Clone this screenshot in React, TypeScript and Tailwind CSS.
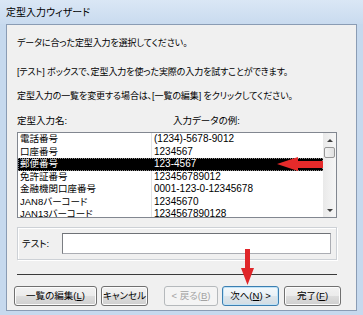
import type { ReactNode } from 'react'

const rows = [
  ['電話番号', '(1234)-5678-9012'],
  ['口座番号', '1234567'],
  ['郵便番号', '123-4567'],
  ['免許証番号', '123456789012'],
  ['金融機関口座番号', '0001-123-0-12345678'],
  ['JAN8バーコード', '12345670'],
  ['JAN13バーコード', '1234567890128'],
]

function Btn({ children, kind, className }: { children: ReactNode; kind?: 'default' | 'disabled'; className?: string }) {
  const look =
    kind === 'disabled'
      ? 'border-[#b5b9bc] bg-[#f4f4f4] text-[#a3a3a3]'
      : kind === 'default'
        ? 'border-[#3c7fb1] bg-[linear-gradient(#f4f9fc,#eaf1f6_50%,#dde6ec_50%,#d2dce3)] shadow-[inset_0_0_0_1px_#bfe2f7] text-black'
        : 'border-[#707070] bg-[linear-gradient(#f2f2f2,#ebebeb_50%,#dddddd_50%,#cfcfcf)] shadow-[inset_0_0_0_1px_#fcfcfc] text-black'
  return (
    <div className={`shrink-0 h-[20px] rounded-[3px] border flex items-center justify-center whitespace-nowrap text-[9.5px] ${look} ${className ?? ''}`}>
      {children}
    </div>
  )
}

export default function App() {
  return (
    <div className="relative w-[363px] h-[315px] overflow-hidden bg-[#c6d9ee] font-['Liberation_Sans','Noto_Sans_CJK_JP',sans-serif] [font-feature-settings:'palt'] text-black">
      {/* title bar */}
      <div className="h-[24px] px-[6px] flex items-center text-[10px] bg-[linear-gradient(#dae7f5,#c9dbef)]">
        定型入力ウィザード
      </div>

      {/* dialog body */}
      <div className="mx-[6px] h-[287px] border border-[#8a9cb4] bg-[#f0f0f0] flex flex-col">
        <div className="pl-[10px] pr-[19px] text-[9.5px] leading-[12px]">
          <div className="text-[9px] tracking-[-0.1px]">
            <p className="mt-[12px]">データに合った定型入力を選択してください。</p>
            <p className="mt-[17px]">[テスト] ボックスで、定型入力を使った実際の入力を試すことができます。</p>
            <p className="mt-[12px]">定型入力の一覧を変更する場合は、[一覧の編集] をクリックしてください。</p>
          </div>

          <div className="mt-[13px] grid grid-cols-[156px_1fr]">
            <span>定型入力名:</span>
            <span>入力データの例:</span>
          </div>

          {/* list box */}
          <div className="mt-[5px] h-[86px] border border-[#828790] bg-white flex overflow-hidden">
            <div className="flex-1 overflow-hidden">
              {rows.map(([name, sample], i) => {
                const sel = i === 2
                return (
                  <div
                    key={name}
                    className={`h-[12.5px] flex items-center leading-[12px] ${sel ? 'bg-black text-white outline outline-1 outline-dotted outline-[#888] -outline-offset-1' : ''}`}
                  >
                    <span className={`w-[134px] shrink-0 pl-[2px] h-full flex items-center border-r ${sel ? 'border-black' : 'border-[#e3e3e3]'}`}>{name}</span>
                    <span className="pl-[2px] text-[10px]">{sample}</span>
                  </div>
                )
              })}
            </div>
            {/* scrollbar */}
            <div className="w-[13px] bg-[linear-gradient(90deg,#e9e9e9,#f6f6f6)] flex flex-col items-center">
              <div className="h-[14px] flex items-center justify-center">
                <div className="w-0 h-0 border-l-[3px] border-r-[3px] border-b-[3px] border-l-transparent border-r-transparent border-b-[#404040]" />
              </div>
              <div className="w-[11px] h-[11px] rounded-[2px] border border-[#979797] bg-[linear-gradient(90deg,#f3f3f3,#e1e1e1)]" />
              <div className="flex-1" />
              <div className="h-[14px] flex items-center justify-center">
                <div className="w-0 h-0 border-l-[3px] border-r-[3px] border-t-[3px] border-l-transparent border-r-transparent border-t-[#404040]" />
              </div>
            </div>
          </div>

          {/* test group */}
          <div className="mt-[9px] h-[33px] border border-[#cdd1d6] shadow-[inset_1px_1px_0_#ffffff,1px_1px_0_#ffffff] flex items-center pl-[4px] pr-[5px]">
            <span className="w-[40px] shrink-0">テスト:</span>
            <div className="flex-1 h-[21px] border border-[#abadb3] border-t-[#6f7277] border-l-[#7a7d82] bg-white" />
          </div>

          <div className="mt-[14px] h-px bg-[#3a3a3a]" />
        </div>

        {/* buttons */}
        <div className="mt-[11px] pl-[7px] flex">
          <Btn className="w-[83px]">一覧の編集(<u>L</u>)</Btn>
          <Btn className="w-[47px] ml-[4px]">キャンセル</Btn>
          <Btn kind="disabled" className="w-[54px] ml-[16px]">&lt; 戻る(<u>B</u>)</Btn>
          <Btn kind="default" className="w-[57px] ml-[4px]">次へ(<u>N</u>) &gt;</Btn>
          <Btn className="w-[57px] ml-[5px]">完了(<u>F</u>)</Btn>
        </div>
      </div>

      {/* red annotation arrows */}
      <svg className="absolute left-0 top-0 pointer-events-none" width="363" height="315">
        <polygon points="277,164 298,157 298,161 323,161 323,168 298,168 298,171" fill="#e52a2a" />
        <polygon points="245,249 250,249 250,268 254,268 247.5,285 241,268 245,268" fill="#e0262a" />
      </svg>
    </div>
  )
}
